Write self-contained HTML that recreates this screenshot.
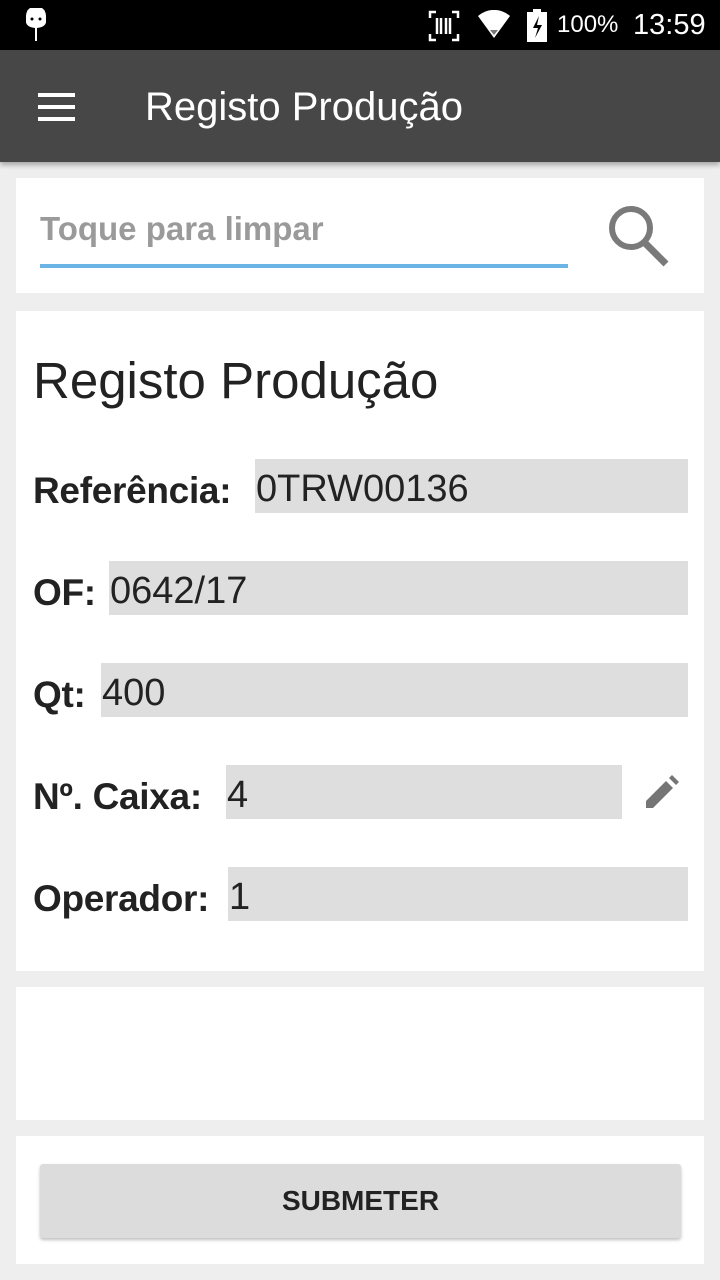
<!DOCTYPE html>
<html><head><meta charset="utf-8"><style>
*{margin:0;padding:0;box-sizing:border-box}
body{width:720px;height:1280px;background:#eeeeee;font-family:"Liberation Sans",sans-serif;position:relative;overflow:hidden}
.abs{position:absolute}
.card{position:absolute;left:16px;width:688px;background:#fff}
.lbl{position:absolute;left:33px;font-size:37px;font-weight:bold;color:#222;letter-spacing:-0.3px}
.fld{position:absolute;background:#dedede;height:54px;font-size:38px;color:#222;padding-left:1px;line-height:60px}
</style></head><body>
<div class="abs" style="left:0;top:0;width:720px;height:50px;background:#000"></div>
<svg class="abs" style="left:22px;top:8px" width="28" height="34" viewBox="0 0 28 34"><path d="M4 8a10 10 0 0 1 20 0v6H4z" fill="#fff"/><path d="M6 2l3 4M22 2l-3 4" stroke="#fff" stroke-width="2"/><circle cx="10" cy="11" r="1.5" fill="#000"/><circle cx="18" cy="11" r="1.5" fill="#000"/><path d="M4 14h20a10 6 0 0 1-20 0z" fill="#fff"/><rect x="13" y="19" width="2" height="14" fill="#fff"/></svg>
<svg class="abs" style="left:428px;top:10px" width="32" height="32" viewBox="0 0 32 32" fill="none" stroke="#fff" stroke-width="2.5"><path d="M2 8V2h6M24 2h6v6M30 24v6h-6M8 30H2v-6"/><path d="M9 8v16M13 8v16M18 8v16M22 8v16"/></svg>
<svg class="abs" style="left:477px;top:10px" width="34" height="30" viewBox="0 0 34 30"><path d="M1 6a24 24 0 0 1 32 0L17 28z" fill="#fff"/><path d="M13 20h8l-4 5z" fill="#777"/></svg>
<svg class="abs" style="left:526px;top:9px" width="22" height="33" viewBox="0 0 22 33"><rect x="7" y="0" width="8" height="4" fill="#fff"/><rect x="1" y="3" width="20" height="30" fill="#fff"/><path d="M13 7l-6 12h5l-3 10 7-13h-5z" fill="#000"/></svg>
<div class="abs" style="left:557px;top:11px;color:#fff;font-size:24px">100%</div>
<div class="abs" style="left:633px;top:9px;color:#fff;font-size:29px">13:59</div>
<div class="abs" style="left:0;top:50px;width:720px;height:112px;background:#474747;box-shadow:0 3px 5px rgba(0,0,0,.3)"></div>
<div class="abs" style="left:38px;top:93px;width:37px;height:4px;background:#fff;box-shadow:0 12px 0 #fff,0 24px 0 #fff"></div>
<div class="abs" style="left:145px;top:85px;color:#fff;font-size:40px">Registo Produção</div>
<div class="card" style="top:178px;height:115px"></div>
<div class="abs" style="left:40px;top:210px;color:#9a9a9a;font-size:33px;font-weight:bold">Toque para limpar</div>
<div class="abs" style="left:40px;top:264px;width:528px;height:4px;background:#6ab4e6"></div>
<svg class="abs" style="left:605px;top:202px" width="68" height="66" viewBox="0 0 68 66" fill="none" stroke="#7a7a7a" stroke-width="6"><circle cx="26" cy="26" r="19"/><path d="M39 40l22 22" stroke-width="7"/></svg>
<div class="card" style="top:311px;height:660px"></div>
<div class="abs" style="left:33px;top:351px;font-size:51px;color:#222">Registo Produção</div>
<div class="lbl" style="top:470px">Referência:</div><div class="fld" style="left:255px;top:459px;width:433px">0TRW00136</div>
<div class="lbl" style="top:572px">OF:</div><div class="fld" style="left:109px;top:561px;width:579px">0642/17</div>
<div class="lbl" style="top:674px">Qt:</div><div class="fld" style="left:101px;top:663px;width:587px">400</div>
<div class="lbl" style="top:776px">Nº. Caixa:</div><div class="fld" style="left:226px;top:765px;width:396px">4</div>
<svg class="abs" style="left:645px;top:773px" width="36" height="36" viewBox="0 0 36 36"><path d="M1 35V28L21 8l7 7L8 35z" fill="#757575"/><path d="M24 5l3-3 7 7-3 3z" fill="#757575"/></svg>
<div class="lbl" style="top:878px">Operador:</div><div class="fld" style="left:228px;top:867px;width:460px">1</div>
<div class="card" style="top:987px;height:133px"></div>
<div class="card" style="top:1136px;height:128px"></div>
<div class="abs" style="left:40px;top:1164px;width:641px;height:74px;background:#dcdcdc;border-radius:3px;box-shadow:0 2px 3px rgba(0,0,0,.25);text-align:center;line-height:74px;font-size:28px;font-weight:bold;color:#222">SUBMETER</div>
</body></html>
